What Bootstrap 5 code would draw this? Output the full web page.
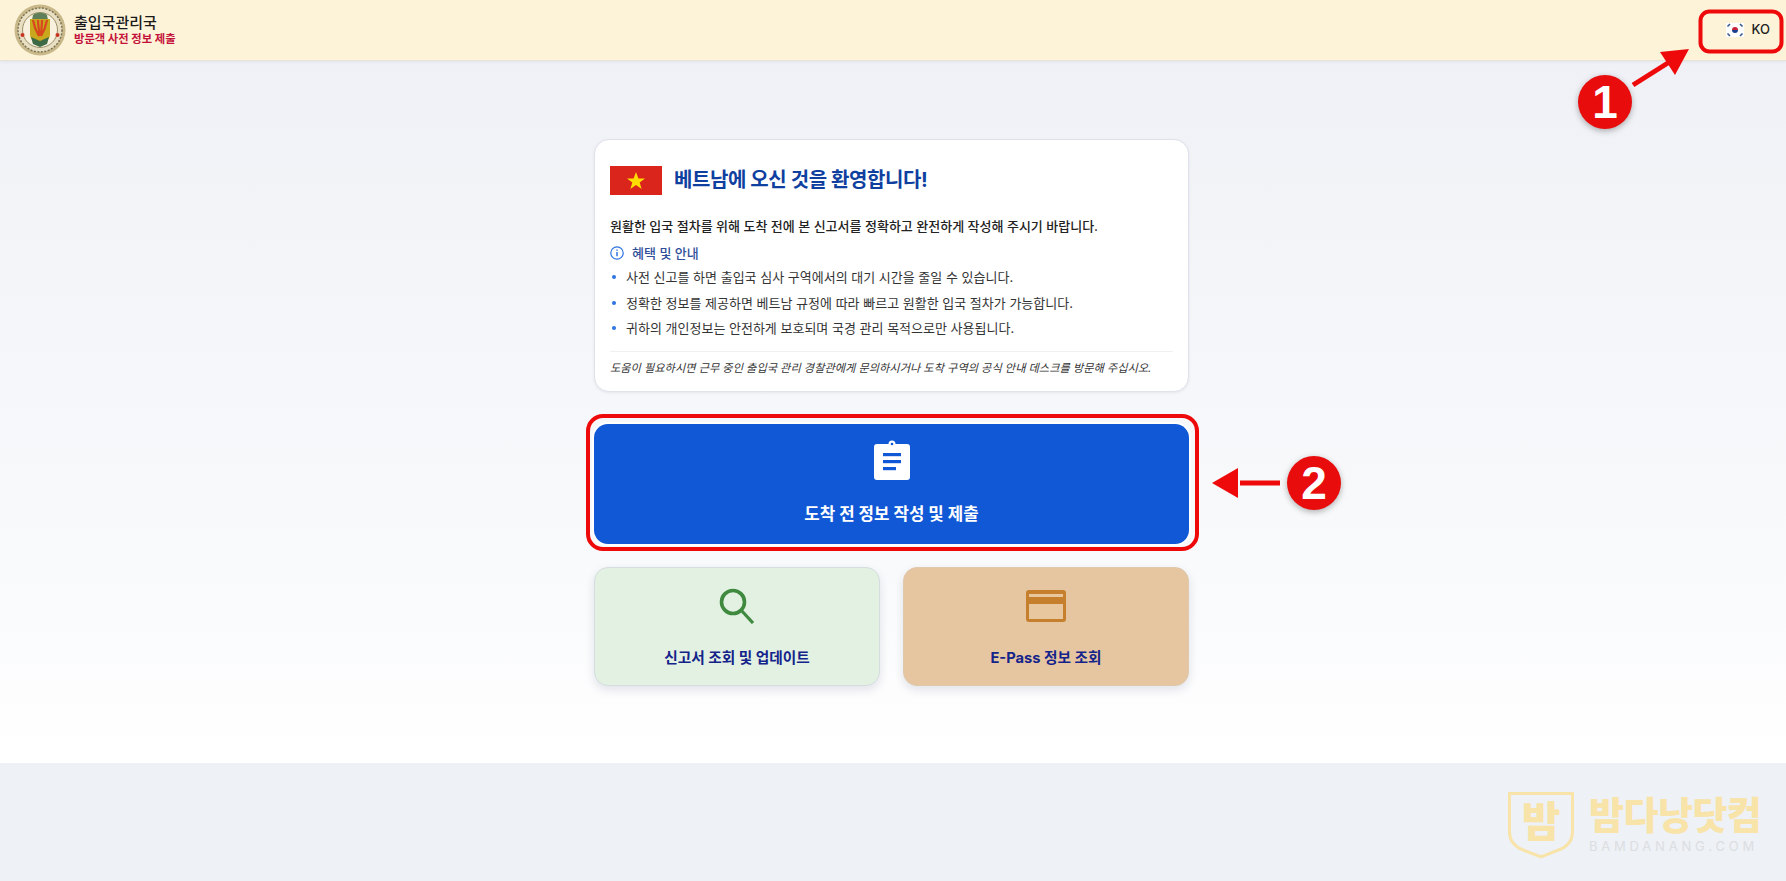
<!DOCTYPE html>
<html lang="ko">
<head>
<meta charset="UTF-8">
<title>출입국관리국</title>
<link href="https://cdn.jsdelivr.net/npm/bootstrap@5.3.3/dist/css/bootstrap.min.css" rel="stylesheet">
<style>
    html, body { height: 881px; overflow: hidden; }
    body { position: relative; background: #eef1f5; font-family: "Inter", "Noto Sans CJK KR", sans-serif; color: #222; }
    .top-bar { height: 61px; padding: 0 16px 0 14px; background: #fdf3d9; border-bottom: 1px solid #e6e3d8; box-shadow: 0 1px 3px rgba(0,0,0,.06); }
    .org-name { font-size: 15px; line-height: 18px; font-weight: 500; color: #1a1a1a; }
    .org-sub { font-size: 11.3px; line-height: 15px; font-weight: 700; color: #c4123a; }
    .lang-btn { font-size: 13px; font-weight: 500; color: #222; padding-right: 0; }
    .page-main { height: 702px; padding: 78px 3px 0 0; background: linear-gradient(#eff1f6, #fafbfc 80%, #fff); }
    .page-col { width: 595px; }
    .welcome-card { padding: 26px 15px 14px; border: 1px solid #dfe2ea; border-radius: 15px; background: #fff; box-shadow: 0 1px 3px rgba(30,40,80,.08); }
    .welcome-title { font-size: 20px; line-height: 29px; font-weight: 700; color: #0f3f9f; letter-spacing: -.4px; }
    .intro-line { margin-top: 21px; font-size: 13px; line-height: 20px; font-weight: 500; color: #222; }
    .info-head { margin-top: 7px; font-size: 13px; line-height: 20px; font-weight: 500; color: #2f4f9a; }
    .info-list { margin: 4px 0 0; font-size: 13px; line-height: 20px; color: #333; }
    .info-list li { display: flex; align-items: center; gap: 10px; padding-left: 2px; margin-bottom: 5.5px; }
    .info-list li::before { content: ""; width: 4px; height: 4px; border-radius: 50%; background: #2f74e0; }
    .help-line { margin-top: 13px; padding-top: 7px; border-top: 1px solid #f0f0f3; font-size: 11.2px; line-height: 18px; font-style: italic; color: #333; white-space: nowrap; }
    .act-main, .act-sub { display: flex; flex-direction: column; align-items: center; font-weight: 700; }
    .act-main { height: 120px; margin-top: 32px; padding-top: 16px; gap: 22px; font-size: 16.8px; line-height: 24px; color: #fff; background: #1058d6; border: 0; border-radius: 14px; box-shadow: 0 0 0 2px #fff; }
    .act-main:hover { color: #fff; background: #0e50c4; }
    .act-row { margin-top: 23px; gap: 23px; }
    .act-sub { flex: 1 1 0; height: 119px; padding-top: 20px; gap: 24px; font-size: 14.7px; line-height: 20px; color: #14238a; border: 1px solid #d6dde0; border-radius: 14px; box-shadow: 0 4px 10px rgba(30,40,80,.12); }
    .act-sub:hover { color: #14238a; }
    .act-green { background: #e3f1e3; }
    .act-green:hover { background: #e3f1e3; }
    .act-tan { background: #e6c6a0; border-color: #e0c8ac; }
    .act-tan:hover { background: #e6c6a0; }
    .mark-layer { position: absolute; left: 0; top: 0; pointer-events: none; }
    .mark-dot { filter: drop-shadow(0 2px 3px rgba(0,0,0,.3)); }
    .mark-num { font-family: "Liberation Sans", sans-serif; font-size: 46px; font-weight: 700; fill: #fff; text-anchor: middle; }
    .water-mark { position: absolute; left: 1508px; top: 792px; gap: 15px; }
    .water-ko { font-size: 38px; line-height: 46px; font-weight: 900; color: #f8e3a8; letter-spacing: -.5px; }
    .water-en { font-size: 13px; line-height: 16px; color: #dcdee2; letter-spacing: 3.8px; }
    .shield-box { position: relative; width: 66px; height: 67px; }
    .shield-txt { position: absolute; left: 0; right: 0; top: 4px; font-size: 42px; line-height: 52px; font-weight: 900; color: #f8e3a8; text-align: center; }
</style>
</head>
<body>
    <nav class="navbar top-bar d-flex align-items-center justify-content-between flex-nowrap">
        <div class="d-flex align-items-center gap-2">
            <svg width="52" height="52" viewBox="0 0 52 52">
                <circle cx="26" cy="26" r="25.5" fill="#c9b98a"/>
                <circle cx="26" cy="26" r="22" fill="#e9dfc3" stroke="#7d7356" stroke-width="1.5" stroke-dasharray="2 1.500"/>
                <circle cx="26" cy="26" r="17.500" fill="#f7f1dd" stroke="#9b8f6a" stroke-width="1"/>
                <path d="M19 11c3-3 11-3 14 0l1 5H18z" fill="#5f7f5a"/>
                <path d="M16 15h20v15c0 6-4 8-10 11-6-3-10-5-10-11z" fill="#c9a81e"/>
                <path d="M19 16c1 6 3 11 6 16M24 16c0 6 1 11 2 16M33 16c-1 6-3 11-6 16M28 16c0 6-1 11-1 16" fill="none" stroke="#d8481c" stroke-width="2.2"/>
                <path d="M17 33l9 4 9-4-2 7-7 3-7-3z" fill="#3d6a44"/>
                <circle cx="8.500" cy="31" r="2" fill="#c8321f"/>
                <circle cx="43.500" cy="31" r="2" fill="#c8321f"/>
            </svg>
            <div>
                <div class="org-name">출입국관리국</div>
                <div class="org-sub">방문객 사전 정보 제출</div>
            </div>
        </div>
        <button class="btn lang-btn d-flex align-items-center gap-2 border-0">
            <svg width="18" height="14" viewBox="0 0 18 14">
                <rect width="18" height="14" fill="#fff"/>
                <path d="M6 7a3 3 0 0 1 6 0z" fill="#c8203a"/>
                <path d="M6 7a3 3 0 0 0 6 0z" fill="#1d3f8f"/>
                <g stroke="#3b5a8f" stroke-width="1.6">
                    <path d="M1.500 3.500l2.500-2.500M14 1l2.500 2.500M1.500 10.500l2.500 2.500M14 13l2.500-2.500"/>
                </g>
            </svg>
            <span>KO</span>
        </button>
    </nav>

    <main class="page-main">
        <div class="page-col mx-auto">
            <section class="welcome-card">
                <div class="d-flex align-items-center gap-2">
                    <svg class="me-1" width="52" height="29" viewBox="0 0 52 29">
                        <rect width="52" height="29" fill="#da251d"/>
                        <polygon points="26,6 28.4,12.4 35,12.4 29.7,16.4 31.6,23 26,19 20.4,23 22.3,16.4 17,12.4 23.6,12.4" fill="#ffdd00"/>
                    </svg>
                    <h1 class="welcome-title m-0">베트남에 오신 것을 환영합니다!</h1>
                </div>
                <p class="intro-line mb-0">원활한 입국 절차를 위해 도착 전에 본 신고서를 정확하고 완전하게 작성해 주시기 바랍니다.</p>
                <div class="info-head d-flex align-items-center gap-2">
                    <svg width="14" height="14" viewBox="0 0 14 14" fill="none" stroke="#2f74e0" stroke-width="1.2">
                        <circle cx="7" cy="7" r="6.2"/>
                        <path d="M7 6v4.2" stroke-width="1.5"/>
                        <path d="M7 3.4v1.4" stroke-width="1.5"/>
                    </svg>
                    <span>혜택 및 안내</span>
                </div>
                <ul class="info-list list-unstyled mb-0">
                    <li>사전 신고를 하면 출입국 심사 구역에서의 대기 시간을 줄일 수 있습니다.</li>
                    <li>정확한 정보를 제공하면 베트남 규정에 따라 빠르고 원활한 입국 절차가 가능합니다.</li>
                    <li>귀하의 개인정보는 안전하게 보호되며 국경 관리 목적으로만 사용됩니다.</li>
                </ul>
                <p class="help-line mb-0">도움이 필요하시면 근무 중인 출입국 관리 경찰관에게 문의하시거나 도착 구역의 공식 안내 데스크를 방문해 주십시오.</p>
            </section>

            <button class="btn act-main w-100">
                <svg width="36" height="40" viewBox="0 0 36 40">
                    <path d="M3 4h11.500a3.500 3.500 0 0 1 7 0H33a3 3 0 0 1 3 3v30a3 3 0 0 1-3 3H3a3 3 0 0 1-3-3V7a3 3 0 0 1 3-3z" fill="#fff"/>
                    <circle cx="18" cy="4" r="1.300" fill="#1058d6"/>
                    <rect x="9" y="13" width="18" height="3.2" fill="#1058d6"/>
                    <rect x="9" y="20" width="18" height="3.2" fill="#1058d6"/>
                    <rect x="9" y="27" width="13" height="3.2" fill="#1058d6"/>
                </svg>
                <span>도착 전 정보 작성 및 제출</span>
            </button>

            <div class="act-row d-flex">
                <button class="btn act-sub act-green">
                    <svg width="36" height="36" viewBox="0 0 36 36" fill="none" stroke="#3f8a3f">
                        <circle cx="14" cy="14" r="11.500" stroke-width="3.600"/>
                        <path d="M22 22l12 13" stroke-width="3.200"/>
                    </svg>
                    <span>신고서 조회 및 업데이트</span>
                </button>
                <button class="btn act-sub act-tan">
                    <svg width="40" height="36" viewBox="0 0 40 36">
                        <rect y="2" width="40" height="32" rx="3" fill="#c67f2c"/>
                        <rect x="3" y="6" width="34" height="3" fill="#e8c79f"/>
                        <rect x="3" y="16" width="34" height="15" fill="#e8c79f"/>
                    </svg>
                    <span>E-Pass 정보 조회</span>
                </button>
            </div>
        </div>
    </main>

    <div class="water-mark d-flex">
        <div class="shield-box">
            <svg width="66" height="67" viewBox="0 0 66 67">
                <path d="M1.5 1.5h63v38c0 9-4 13-10 17L33 65 11.5 56.500c-6-4-10-8-10-17z" fill="none" stroke="#f8e3a8" stroke-width="3"/>
            </svg>
            <div class="shield-txt">밤</div>
        </div>
        <div>
            <div class="water-ko">밤다낭닷컴</div>
            <div class="water-en">BAMDANANG.COM</div>
        </div>
    </div>

    <svg class="mark-layer" width="1786" height="881" viewBox="0 0 1786 881">
        <rect x="1700.500" y="11.500" width="81" height="40" rx="9" fill="none" stroke="#ee0a0a" stroke-width="4"/>
        <rect x="588" y="416" width="609" height="133" rx="15" fill="none" stroke="#ee0a0a" stroke-width="4"/>
        <path d="M1633 85l38-24" stroke="#ee0a0a" stroke-width="5"/>
        <polygon points="1689,49 1675,75 1660,52" fill="#ee0a0a"/>
        <path d="M1280 483h-40" stroke="#ee0a0a" stroke-width="5"/>
        <polygon points="1212,483 1238,468 1238,498" fill="#ee0a0a"/>
        <circle class="mark-dot" cx="1605" cy="102" r="27" fill="#e80c0c"/>
        <circle class="mark-dot" cx="1314" cy="483" r="27" fill="#e80c0c"/>
        <text class="mark-num" x="1605" y="118">1</text>
        <text class="mark-num" x="1314" y="499">2</text>
    </svg>
</body>
</html>
